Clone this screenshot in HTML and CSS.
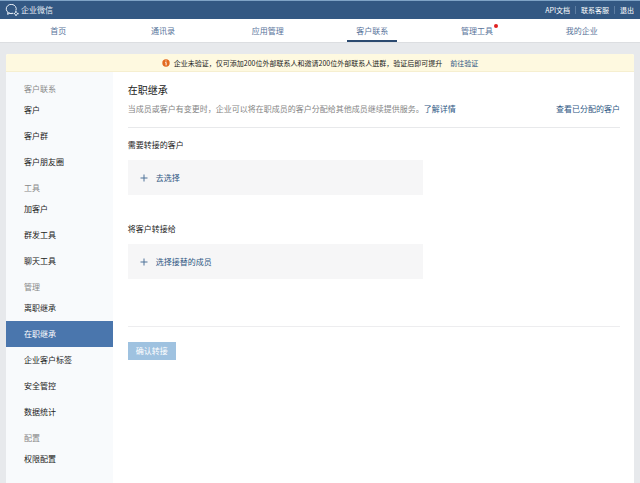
FILE: index.html
```
<!DOCTYPE html>
<html lang="zh-CN">
<head>
    <meta charset="UTF-8" />
    <meta name="viewport" content="width=device-width, initial-scale=1" />
    <title>企业微信</title>
    <link rel="stylesheet" href="styles.css">
</head>
<body>
    <header class="topbar">
        <a class="logo" href="#">
            <svg class="logo_icon" viewBox="0 0 14 12" aria-hidden="true">
                <path d="M10.9 6.6A5 4.6 0 1 0 7.8 9.3" />
                <path d="M2.9 8.2L2.6 10.4L4.6 9.3Q6.3 9.9 7.8 9.3" />
                <circle cx="10.9" cy="8" r="0.9" />
                <circle cx="12.8" cy="9.6" r="0.9" />
                <circle cx="11" cy="11" r="0.9" />
                <circle cx="9.3" cy="9.6" r="0.8" />
            </svg>
            <span>企业微信</span>
        </a>
        <div class="toplinks">
            <a href="#">API文档</a>
            <a href="#">联系客服</a>
            <a href="#">退出</a>
        </div>
    </header>

    <nav class="nav">
        <a href="#"><span>首页</span></a>
        <a href="#"><span>通讯录</span></a>
        <a href="#"><span>应用管理</span></a>
        <a href="#" class="active"><span>客户联系</span></a>
        <a href="#"><span class="has_dot">管理工具</span></a>
        <a href="#"><span>我的企业</span></a>
    </nav>

    <div class="panel">
        <div class="notice">
            <svg class="notice_icon" viewBox="0 0 8 8" aria-hidden="true">
                <circle cx="4" cy="4" r="3.7" fill="#e2691f" />
                <path d="M4 1.5V2.4M3.3 3.4H4.1V6.4" fill="none" stroke="#fff" stroke-width="1" />
            </svg>
            <span>企业未验证，仅可添加200位外部联系人和邀请200位外部联系人进群，验证后即可提升</span>
            <a href="#">前往验证</a>
        </div>

        <div class="columns">
            <aside class="sidebar">
                <div class="group">
                    <h2>客户联系</h2>
                    <a href="#">客户</a>
                    <a href="#">客户群</a>
                    <a href="#">客户朋友圈</a>
                </div>
                <div class="group">
                    <h2>工具</h2>
                    <a href="#">加客户</a>
                    <a href="#">群发工具</a>
                    <a href="#">聊天工具</a>
                </div>
                <div class="group">
                    <h2>管理</h2>
                    <a href="#">离职继承</a>
                    <a href="#" class="active">在职继承</a>
                    <a href="#">企业客户标签</a>
                    <a href="#">安全管控</a>
                    <a href="#">数据统计</a>
                </div>
                <div class="group">
                    <h2>配置</h2>
                    <a href="#">权限配置</a>
                </div>
            </aside>

            <main class="content">
                <div class="intro">
                    <h1>在职继承</h1>
                    <div class="intro_row">
                        <p>当成员或客户有变更时，企业可以将在职成员的客户分配给其他成员继续提供服务。<a href="#">了解详情</a></p>
                        <a href="#">查看已分配的客户</a>
                    </div>
                </div>

                <form class="transfer">
                    <section class="field">
                        <h3>需要转接的客户</h3>
                        <div class="picker">
                            <button type="button">
                                <svg viewBox="0 0 8 8" aria-hidden="true"><path d="M4 0.5V7.5M0.5 4H7.5" /></svg>
                                去选择
                            </button>
                        </div>
                    </section>
                    <section class="field">
                        <h3>将客户转接给</h3>
                        <div class="picker">
                            <button type="button">
                                <svg viewBox="0 0 8 8" aria-hidden="true"><path d="M4 0.5V7.5M0.5 4H7.5" /></svg>
                                选择接替的成员
                            </button>
                        </div>
                    </section>
                    <div class="actions">
                        <button type="submit" class="submit" disabled>确认转接</button>
                    </div>
                </form>
            </main>
        </div>
    </div>
</body>
</html>
```
FILE: styles.css
```
*{
    box-sizing: border-box;
}
body{
    margin: 0;
    min-height: 100vh;
    display: flex;
    flex-direction: column;
    background: #e7e9ec;
    color: #222;
    font-family: "Noto Sans CJK SC", sans-serif;
    font-size: 8px;
    line-height: 12px;
}
h1, h2, h3, p{
    margin: 0;
    font-weight: normal;
    font-size: 8px;
}
a{
    color: #2e5783;
    text-decoration: none;
}
button{
    border: 0;
    padding: 0;
    font: inherit;
    cursor: pointer;
}

/* 顶部栏 */
.topbar{
    display: flex;
    justify-content: space-between;
    align-items: center;
    height: 19px;
    padding: 0 6px 0 5px;
    background: #335883;
    border-top: 1px solid #7fa3c6;
}
.logo{
    display: flex;
    align-items: center;
    gap: 2px;
    color: #e6edf5;
}
.logo_icon{
    width: 14px;
    height: 12px;
    fill: none;
    stroke: #e6edf5;
    stroke-width: 1;
}
.logo_icon circle{
    fill: #e6edf5;
    stroke: none;
}
.toplinks{
    display: flex;
    font-size: 7px;
    line-height: 8px;
}
.toplinks a{
    color: #fff;
}
.toplinks a + a{
    margin-left: 5px;
    padding-left: 5px;
    border-left: 1px solid #5d7da2;
}

/* 主导航 */
.nav{
    display: flex;
    height: 24px;
    padding: 0 6px;
    background: #fff;
    border-bottom: 1px solid #dcdee1;
}
.nav a{
    flex: 1;
    display: flex;
    justify-content: center;
    color: #58739a;
}
.nav span{
    position: relative;
    padding: 6px 9px 0;
    border-bottom: 2px solid transparent;
}
.nav .active span{
    border-bottom-color: #2b4a70;
}
.has_dot::after{
    content: "";
    position: absolute;
    top: 5px;
    right: 4px;
    width: 4px;
    height: 4px;
    border-radius: 50%;
    background: #e02020;
}

.panel{
    flex: 1;
    display: flex;
    flex-direction: column;
    margin: 11px 6px 0;
    background: #fff;
    border-radius: 2px 2px 0 0;
    overflow: hidden;
}
.notice{
    display: flex;
    justify-content: center;
    align-items: center;
    height: 18px;
    background: #fef9e0;
    border-bottom: 1px solid #f6efd0;
    font-size: 7px;
}
.notice_icon{
    width: 8px;
    height: 8px;
    margin-right: 4px;
}
.notice a{
    margin-left: 8px;
}

.columns{
    flex: 1;
    display: flex;
}

/* 侧边栏 */
.sidebar{
    width: 17%;
    flex-shrink: 0;
    padding: 9px 0;
    background: #f8fafc;
}
.group + .group{
    margin-top: 5px;
}
.group h2{
    padding-left: 18px;
    line-height: 16px;
    color: #888;
}
.group a{
    display: block;
    padding-left: 18px;
    line-height: 26px;
    color: #222;
}
.group .active{
    background: #4a76ad;
    color: #fff;
}

/* 内容区 */
.content{
    flex: 1;
    padding: 10px 14px 10px 15px;
}
.intro{
    padding-bottom: 12px;
    border-bottom: 1px solid #e8e9eb;
}
.intro h1{
    font-size: 10px;
    line-height: 16px;
}
.intro_row{
    display: flex;
    justify-content: space-between;
    margin-top: 5px;
}
.intro_row p{
    color: #858585;
}
.field{
    margin-top: 11px;
}
.field + .field{
    margin-top: 28px;
}
.field h3{
    margin-bottom: 9px;
}
.picker{
    width: 60%;
    padding: 12px 12px 11px;
    background: #f6f6f7;
}
.picker button{
    display: flex;
    align-items: center;
    gap: 8px;
    background: none;
    color: #2e5783;
}
.picker svg{
    width: 8px;
    height: 8px;
    fill: none;
    stroke: #4f7299;
    stroke-width: 1;
}
.actions{
    margin-top: 47px;
    padding-top: 15px;
    border-top: 1px solid #ededef;
}
.submit{
    padding: 3px 8px;
    background: #9fc2e0;
    color: #fff;
}
```
